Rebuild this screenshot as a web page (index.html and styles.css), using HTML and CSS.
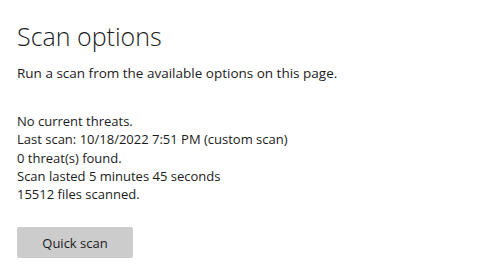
FILE: index.html
```html
<!DOCTYPE html>
<html lang="en">
<head>
    <meta charset="UTF-8">
    <title>Scan options</title>
    <link rel="stylesheet" href="styles.css">
</head>
<body>
    <div class="page">
        <h1>Scan options</h1>
        <p class="intro">Run a scan from the available options on this page.</p>
        <div class="status">
            <p>No current threats.</p>
            <p>Last scan: 10/18/2022 7:51 PM (custom scan)</p>
            <p>0 threat(s) found.</p>
            <p>Scan lasted 5 minutes 45 seconds</p>
            <p>15512 files scanned.</p>
        </div>
        <button class="scan-btn">Quick scan</button>
    </div>
</body>
</html>
```
FILE: styles.css
```css
body {
    margin: 0;
    background: #ffffff;
    color: #1b1b1b;
    font-family: "Open Sans", sans-serif;
}
.page {
    padding: 20px 17px;
}
h1 {
    margin: 0;
    font-size: 25px;
    font-weight: 300;
    line-height: 32px;
}
.intro {
    margin: 12px 0 0;
    font-size: 13.5px;
    line-height: 18px;
}
.status {
    margin-top: 30px;
}
.status p {
    margin: 0;
    font-size: 13px;
    line-height: 18.25px;
}
.scan-btn {
    margin-top: 24px;
    width: 116px;
    height: 31px;
    border: none;
    border-radius: 2px;
    background: #cccccc;
    color: #1b1b1b;
    font-family: "Open Sans", sans-serif;
    font-size: 13px;
}
```
